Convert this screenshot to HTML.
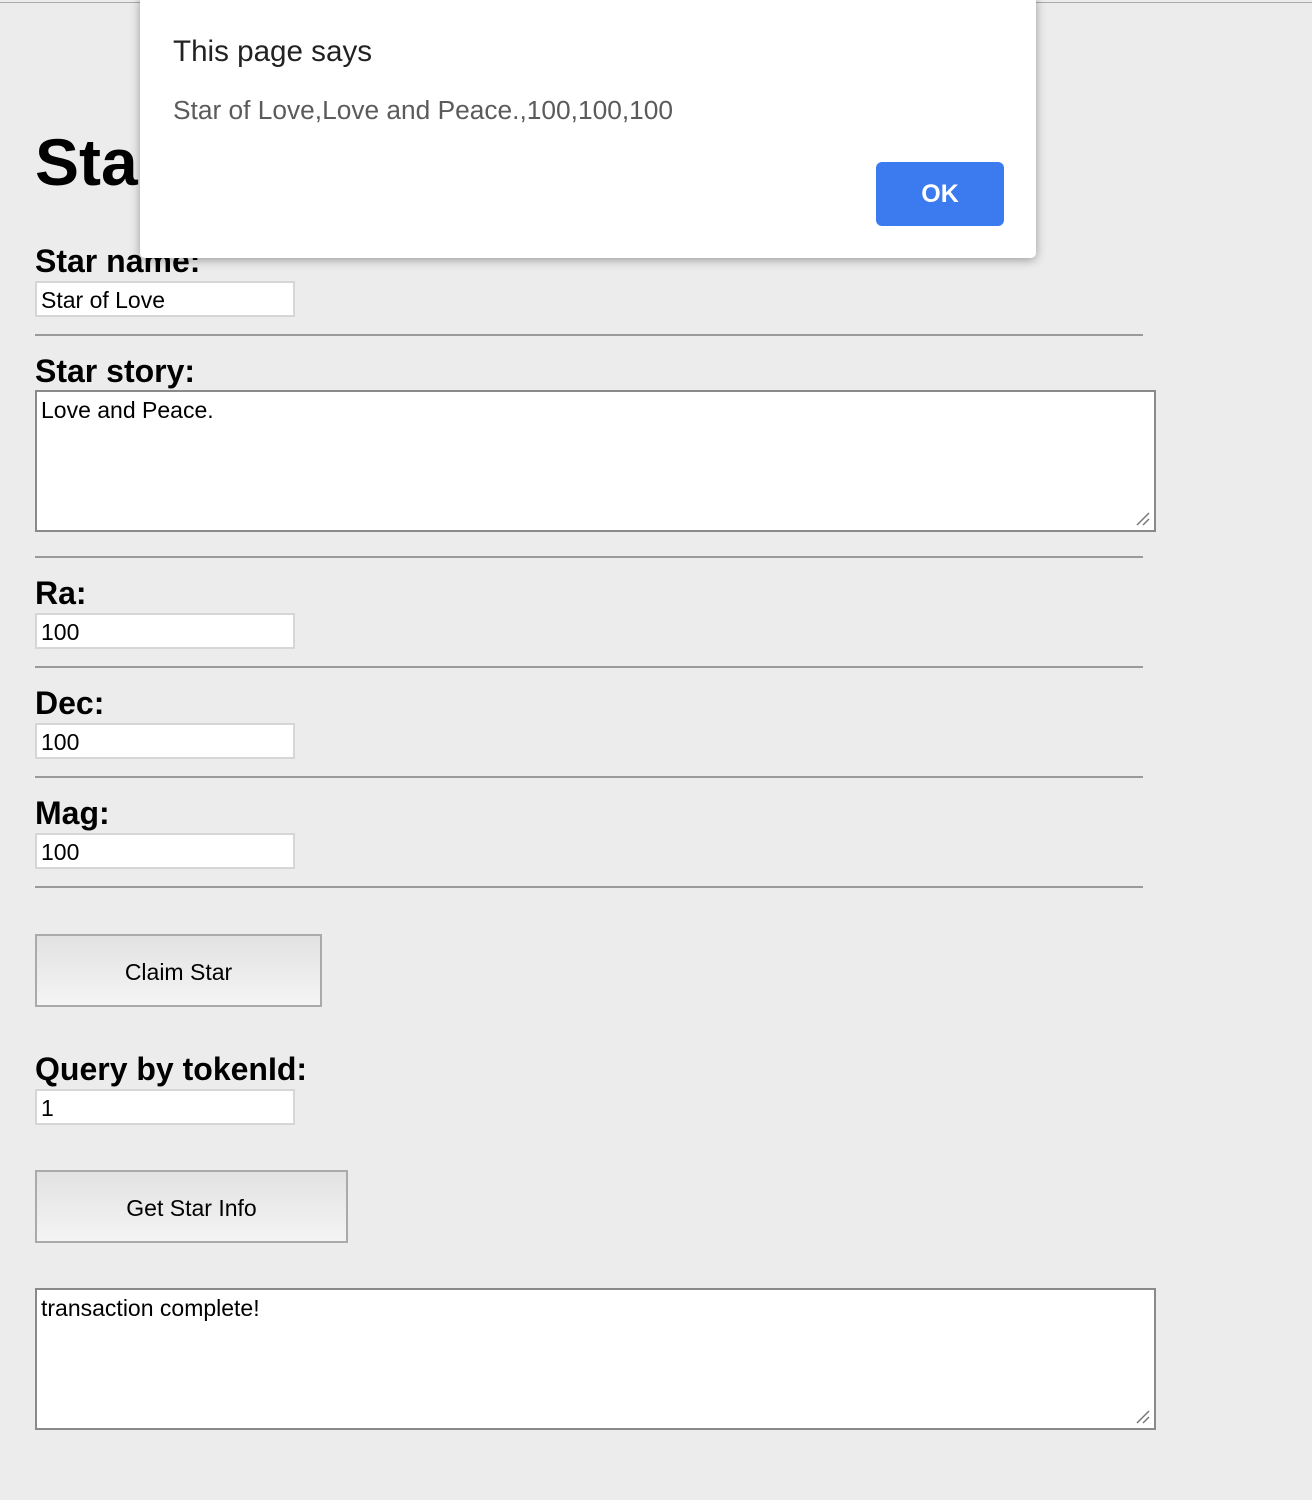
<!DOCTYPE html>
<html><head><meta charset="utf-8"><style>
html,body{margin:0;padding:0;}
body{width:1312px;height:1500px;background:#ececec;position:relative;overflow:hidden;font-family:"Liberation Sans",Arial,sans-serif;}
.a{position:absolute;}
.topline{left:0;top:2px;width:1312px;height:1px;background:#aaa;}
h1{position:absolute;margin:0;left:35px;top:124px;font-size:66px;font-weight:bold;color:#000;line-height:76px;}
.lbl{position:absolute;left:35px;font-size:32px;font-weight:bold;line-height:32px;color:#000;}
.inp{position:absolute;left:35px;height:32px;background:#fff;border:2px solid #d6d6d6;font-size:23px;line-height:34px;padding-left:4px;box-sizing:content-box;width:252px;}
.hr{position:absolute;left:35px;width:1108px;height:2px;background:#9a9a9a;}
.ta{position:absolute;left:35px;width:1117px;height:138px;background:#fff;border:2px solid #8a8a8a;font-size:23px;}
.ta span{position:absolute;left:4px;top:4px;line-height:28px;}
.ta svg{position:absolute;right:2px;bottom:2px;}
.btn{position:absolute;left:35px;height:69px;border:2px solid #aaa;background:linear-gradient(#e2e2e2,#f4f4f4);font-size:23px;text-align:center;line-height:72px;color:#000;box-sizing:content-box;}
.dlg{left:140px;top:-4px;width:896px;height:262px;background:#fff;border-radius:0 0 5px 5px;box-shadow:0 2px 10px rgba(0,0,0,0.35);z-index:5;}
.dlg .t{position:absolute;left:33px;top:39px;font-size:29.6px;color:#222;}
.dlg .m{position:absolute;left:33px;top:99px;font-size:26.3px;color:#5b5b5b;}
.dlg .ok{position:absolute;left:736px;top:166px;width:128px;height:64px;background:#3b7bef;border-radius:6px;color:#fff;font-weight:bold;font-size:25px;text-align:center;line-height:64px;}
</style></head><body>
<div class="a topline"></div>
<h1>Star Notary</h1>
<div class="a dlg"><div class="t">This page says</div><div class="m">Star of Love,Love and Peace.,100,100,100</div><div class="ok">OK</div></div>

<div class="lbl" style="top:245px">Star name:</div>
<div class="inp" style="top:281px">Star of Love</div>
<div class="hr" style="top:334px"></div>

<div class="lbl" style="top:355px">Star story:</div>
<div class="ta" style="top:390px"><span>Love and Peace.</span><svg width="18" height="18"><path d="M3 15L15 3M9 15L15 9" stroke="#777" stroke-width="1.5"/></svg></div>
<div class="hr" style="top:556px"></div>

<div class="lbl" style="top:577px">Ra:</div>
<div class="inp" style="top:613px">100</div>
<div class="hr" style="top:666px"></div>

<div class="lbl" style="top:687px">Dec:</div>
<div class="inp" style="top:723px">100</div>
<div class="hr" style="top:776px"></div>

<div class="lbl" style="top:797px">Mag:</div>
<div class="inp" style="top:833px">100</div>
<div class="hr" style="top:886px"></div>

<div class="btn" style="top:934px;width:283px">Claim Star</div>

<div class="lbl" style="top:1053px">Query by tokenId:</div>
<div class="inp" style="top:1089px">1</div>

<div class="btn" style="top:1170px;width:309px">Get Star Info</div>

<div class="ta" style="top:1288px"><span>transaction complete!</span><svg width="18" height="18"><path d="M3 15L15 3M9 15L15 9" stroke="#777" stroke-width="1.5"/></svg></div>
</body></html>
